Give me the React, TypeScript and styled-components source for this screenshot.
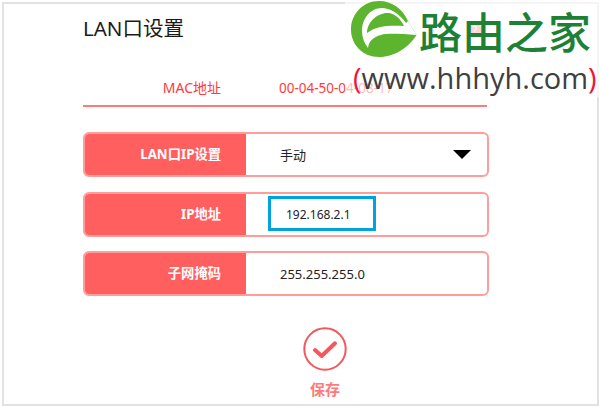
import styled, { createGlobalStyle } from 'styled-components';

const GlobalStyle = createGlobalStyle`
  html, body {
    margin: 0;
    padding: 0;
    background: #fff;
    font-family: "Noto Sans", "Noto Sans CJK SC", sans-serif;
  }
`;

const Frame = styled.div`
  position: relative;
  margin: 2px 0 0 2px;
  width: 597px;
  height: 404px;
  box-sizing: border-box;
  border: 2px solid #e2e2e2;
  background: #fff;
  padding: 9px 0 0 79px;
`;

const Title = styled.h1`
  margin: 0;
  height: 30px;
  font-size: 20.5px;
  line-height: 30px;
  font-weight: 400;
  color: #1a1a1a;
`;

const MacRow = styled.div`
  display: flex;
  margin-top: 28px;
  height: 36px;
  box-sizing: border-box;
  border-bottom: 2px solid #ff7a7a;
  width: 404px;
  font-size: 13.5px;
  line-height: 34px;
  color: #ff3b3b;
`;

const MacLabel = styled.span`
  width: 138px;
  font-size: 14px;
  text-align: right;
  flex: none;
`;

const MacValue = styled.span`
  margin-left: 58px;
`;

const Form = styled.div`
  display: flex;
  flex-direction: column;
  gap: 14.5px;
  margin-top: 25px;
`;

const Row = styled.div`
  display: flex;
  width: 406px;
  height: 45px;
  box-sizing: border-box;
  border: 2px solid #ff9c9c;
  border-radius: 6px;
  overflow: hidden;
`;

const Label = styled.div`
  flex: none;
  width: 161px;
  box-sizing: border-box;
  padding-right: 25px;
  background: #ff5f5f;
  color: #fff;
  font-size: 13.3px;
  font-weight: 700;
  text-align: right;
  line-height: 41px;
`;

const Field = styled.div`
  flex: 1;
  display: flex;
  align-items: center;
  justify-content: space-between;
  padding: 0 16px 0 34px;
  font-size: 13px;
  color: #222;
`;

const Caret = styled.span`
  width: 0;
  height: 0;
  border-left: 9px solid transparent;
  border-right: 9px solid transparent;
  border-top: 9px solid #000;
`;

const Highlight = styled.div`
  width: 108px;
  height: 35px;
  box-sizing: border-box;
  margin: -2px 0 0 -12px;
  padding-left: 15px;
  border: 3px solid #00a2e0;
  font-size: 12px;
  line-height: 32px;
`;

const SaveArea = styled.div`
  display: flex;
  flex-direction: column;
  align-items: center;
  margin-top: 31px;
  width: 484px;
`;

const SaveLabel = styled.div`
  margin-top: 8px;
  font-size: 15px;
  font-weight: 700;
  color: #ff7a7a;
  line-height: 20px;
`;

const HelpBadge = styled.span`
  position: absolute;
  left: 464px;
  top: 19px;
  width: 14px;
  height: 14px;
  border-radius: 50%;
  background: #ff8a8a;
  color: #fff;
  font-size: 10px;
  line-height: 14px;
  text-align: center;
`;

const Watermark = styled.div`
  position: absolute;
  top: -4px;
  left: 341px;
  width: 255px;
  height: 97px;
  box-sizing: border-box;
  padding: 1px 0 0 6px;
  background: rgba(255, 255, 255, 0.65);
`;

const LogoTop = styled.div`
  display: flex;
  align-items: flex-start;
`;

const LogoName = styled.div`
  margin: 4px 0 0 2px;
  font-family: "Noto Sans CJK SC", sans-serif;
  font-size: 43px;
  font-weight: 500;
  line-height: 50px;
  color: #1e8035;
  white-space: nowrap;
`;

const LogoUrl = styled.div`
  margin: 3px 0 0 2px;
  font-family: "Open Sans", sans-serif;
  font-size: 29px;
  line-height: 32px;
  color: #3f3f3f;
  white-space: nowrap;
`;

const Paren = styled.span`
  color: #f0143c;
`;

export default function App() {
  return (
    <Frame>
      <GlobalStyle />
      <Title>LAN口设置</Title>
      <MacRow>
        <MacLabel>MAC地址</MacLabel>
        <MacValue>00-04-50-04-08-17</MacValue>
      </MacRow>
      <Form>
        <Row>
          <Label>LAN口IP设置</Label>
          <Field>
            手动
            <Caret />
          </Field>
        </Row>
        <Row>
          <Label>IP地址</Label>
          <Field>
            <Highlight>192.168.2.1</Highlight>
          </Field>
        </Row>
        <Row>
          <Label>子网掩码</Label>
          <Field>255.255.255.0</Field>
        </Row>
      </Form>
      <SaveArea>
        <svg width="44" height="44" viewBox="0 0 44 44" fill="none">
          <circle cx="22" cy="22" r="20.7" stroke="#f4575c" strokeWidth="2" />
          <path d="M12 23l6.7 6L32 16.3" stroke="#f4575c" strokeWidth="4" strokeLinecap="round" strokeLinejoin="round" />
        </svg>
        <SaveLabel>保存</SaveLabel>
      </SaveArea>
      <HelpBadge>?</HelpBadge>
      <Watermark>
        <LogoTop>
          <svg width="66" height="58" viewBox="0 0 66 58">
            <path
              d="M57 20C52 8 41 0 28 0 12 0 0 13 0 28.500 0 44 12 56 28 56 44 56 58 46 65.500 34L57 20z"
              fill="#5db52f"
            />
            <path
              d="M55 22C48 12 38 7 31 7 19 7 11 18 11 30 11 36 13 42 17 47 18 40 22 36 30 34 36 32 50 33 65.500 34L57 20z"
              fill="#fff"
            />
            <path d="M16 32C16 21 27 11 38 12 44 13 50 18 53 25 38 24 25 25 16 32z" fill="#5db52f" />
          </svg>
          <LogoName>路由之家</LogoName>
        </LogoTop>
        <LogoUrl>
          <Paren>(</Paren>www.hhhyh.com<Paren>)</Paren>
        </LogoUrl>
      </Watermark>
    </Frame>
  );
}
